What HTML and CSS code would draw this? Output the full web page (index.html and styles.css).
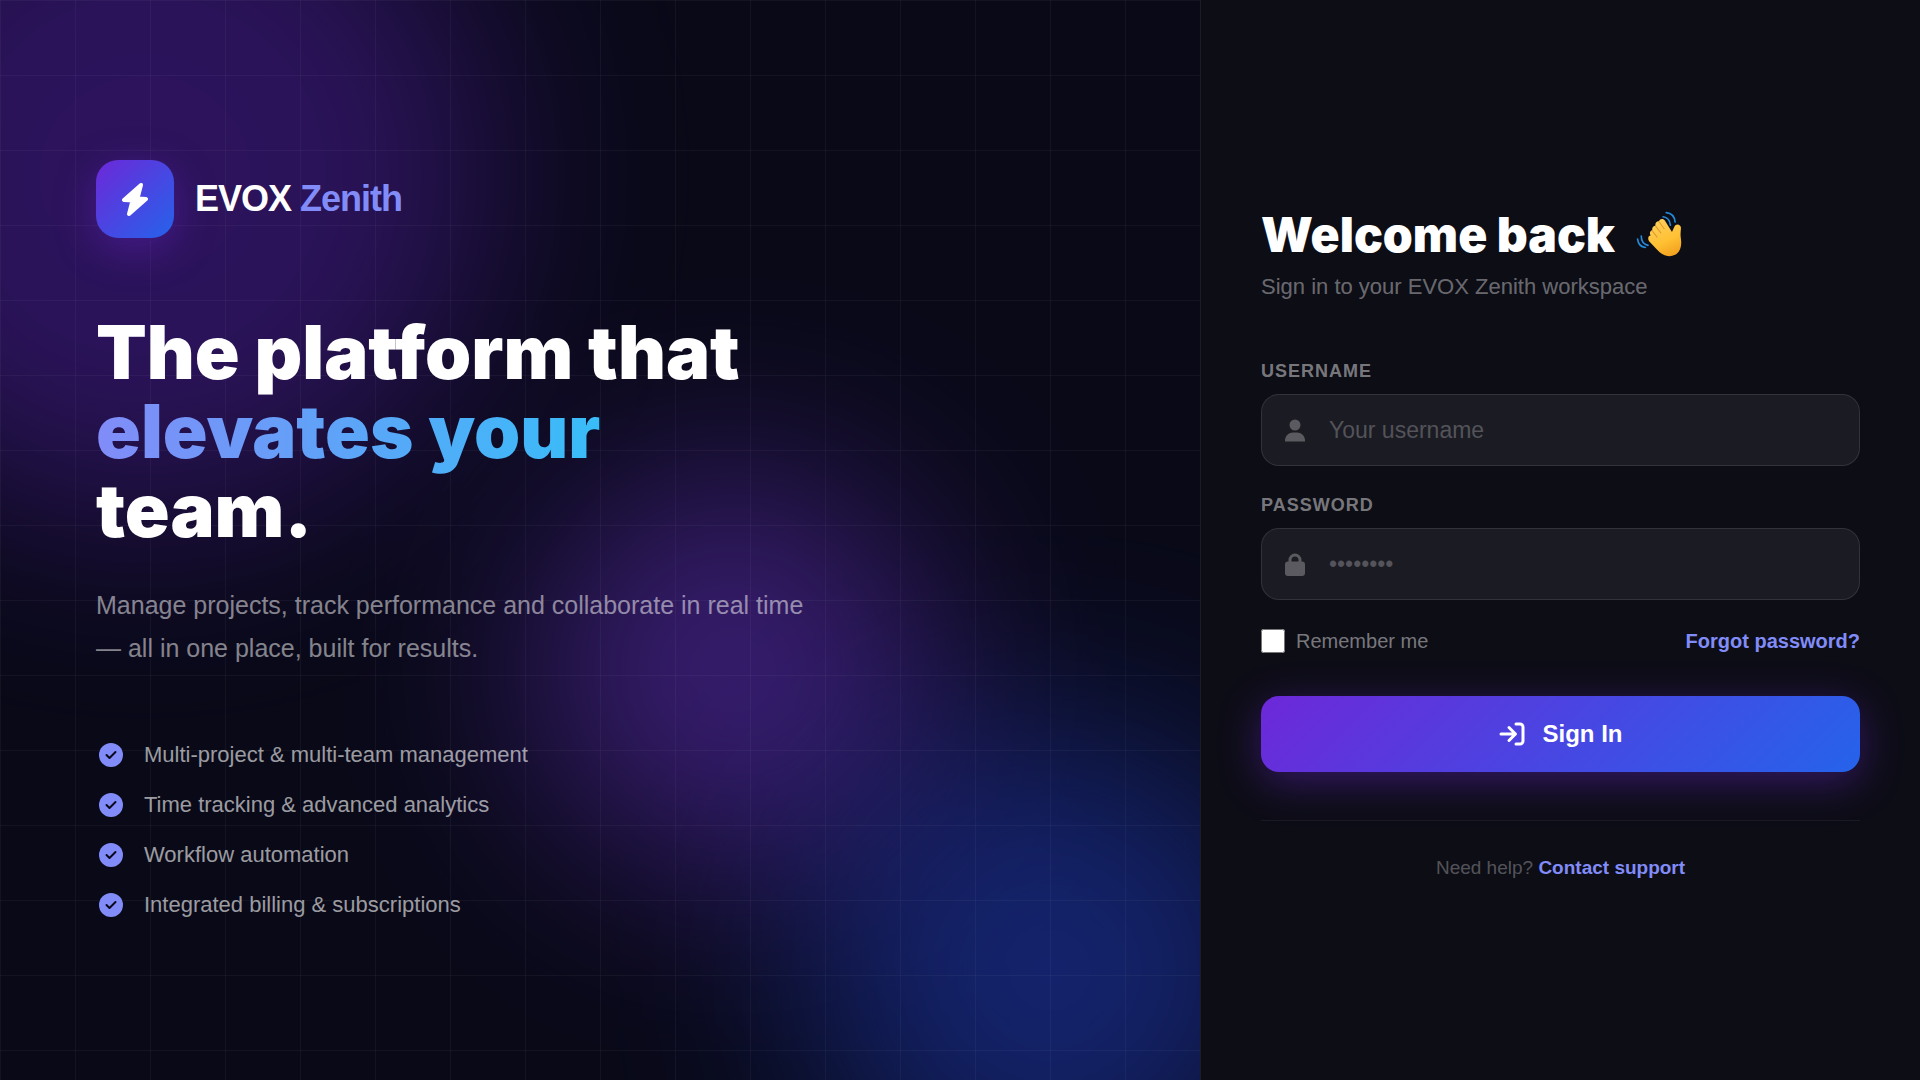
FILE: index.html
```html
<!DOCTYPE html>
<html lang="en">
<head>
  <meta charset="UTF-8" />
  <meta name="viewport" content="width=device-width, initial-scale=1.0" />
  <title>EVOX Zenith - Sign In</title>
  <link rel="stylesheet" href="styles.css">
</head>
<body>
<div class="page">
  <!-- Left panel -->
  <main class="hero">
    <div class="orb orb-1"></div>
    <div class="orb orb-2"></div>
    <div class="orb orb-3"></div>
    <div class="grid-lines"></div>

    <div class="hero-content">
      <div class="brand">
        <div class="brand-icon">
          <svg viewBox="0 0 26 33" width="26" height="33" aria-hidden="true"><path d="M19 2L2 17L10.500 17.500L7 31L24 16L15.500 15.500Z"/></svg>
        </div>
        <div class="brand-name">EVOX <span>Zenith</span></div>
      </div>

      <h1>The platform that<br><span class="gradient-text">elevates your</span><br>team.</h1>

      <p class="hero-text">Manage projects, track performance and collaborate in real time — all in one place, built for results.</p>

      <ul class="features">
        <li><svg viewBox="0 0 24 24" aria-hidden="true"><circle cx="12" cy="12" r="12"/><path d="M7.5 12l3 3 6-6"/></svg>Multi-project &amp; multi-team management</li>
        <li><svg viewBox="0 0 24 24" aria-hidden="true"><circle cx="12" cy="12" r="12"/><path d="M7.5 12l3 3 6-6"/></svg>Time tracking &amp; advanced analytics</li>
        <li><svg viewBox="0 0 24 24" aria-hidden="true"><circle cx="12" cy="12" r="12"/><path d="M7.5 12l3 3 6-6"/></svg>Workflow automation</li>
        <li><svg viewBox="0 0 24 24" aria-hidden="true"><circle cx="12" cy="12" r="12"/><path d="M7.5 12l3 3 6-6"/></svg>Integrated billing &amp; subscriptions</li>
      </ul>
    </div>
  </main>

  <!-- Right panel -->
  <section class="login">
    <h2>Welcome back
      <svg class="wave" viewBox="0 0 48 48" role="img" aria-label="Waving hand">
        <defs>
          <linearGradient id="skin" x1="0.3" y1="0" x2="0.7" y2="1">
            <stop offset="0" stop-color="#ffd05c"/>
            <stop offset="0.6" stop-color="#ffc033"/>
            <stop offset="1" stop-color="#f2a01f"/>
          </linearGradient>
        </defs>
        <g fill="none" stroke="#2489d6" stroke-width="1.6" stroke-linecap="round">
          <path d="M27 6.500c4 .5 6.500 3.500 7 8"/>
          <path d="M30 2.500c5 .5 8 4 8.500 9"/>
          <path d="M6 25c0 4.500 2.500 8 6.500 9"/>
          <path d="M2.500 28c.5 4.500 3.500 7.500 7.500 8"/>
        </g>
        <path fill="url(#skin)" d="M15 24.500c-1.600-2.400-.2-4.800 1.600-5 -.5-2.600 1-4.300 3-4.300 -.5-3 1.500-4.700 3.500-4.300 .6-2.700 4.200-3.200 5.700-.5L35.500 21l2.300-5c1.500-3.500 6.700-2.300 6.300 1.700 -.2 3-.7 5.500-.1 9.300 1.200 7-.5 13.500-5.500 16 -6 3-12.500.5-17-4.500L14 30.500c-2.500-3-1-6 1-6z"/>
        <path fill="none" stroke="#e09a30" stroke-width="1" stroke-linecap="round" d="M16.600 20l4.600 6M19.800 15.500l5 6.500M23.300 11.500l4.700 6.500"/>
      </svg>
    </h2>
    <p class="subtitle">Sign in to your EVOX Zenith workspace</p>

    <form onsubmit="return false">
      <div class="field">
        <label for="username">Username</label>
        <div class="input-wrap">
          <svg viewBox="0 0 20 23" width="20" height="23" aria-hidden="true"><circle cx="10" cy="6" r="5.500"/><path d="M0 22.500v-1C0 16.500 4 13.500 8 13.500h4c4 0 8 3 8 8v1z"/></svg>
          <input type="text" id="username" placeholder="Your username" />
        </div>
      </div>

      <div class="field">
        <label for="password">Password</label>
        <div class="input-wrap">
          <svg viewBox="0 0 20 23" width="20" height="23" aria-hidden="true"><path fill-rule="evenodd" d="M3.500 8.500V7a6.500 6.500 0 0 1 13 0v1.500h.5a3 3 0 0 1 3 3V20a3 3 0 0 1-3 3H3a3 3 0 0 1-3-3v-8.500a3 3 0 0 1 3-3zm3 0h7V7a3.500 3.500 0 0 0-7 0z"/></svg>
          <input type="password" id="password" placeholder="••••••••" />
        </div>
      </div>

      <div class="options">
        <label class="remember"><input type="checkbox" /> Remember me</label>
        <a href="#">Forgot password?</a>
      </div>

      <button type="submit">
        <svg viewBox="0 0 26 24" width="26" height="24" aria-hidden="true"><path d="M2 12h14M10 5.500l6.500 6.500-6.500 6.500M17 2h4a3 3 0 0 1 3 3v14a3 3 0 0 1-3 3h-4"/></svg>
        Sign In
      </button>
    </form>

    <div class="help">Need help? <a href="#">Contact support</a></div>
  </section>
</div>
</body>
</html>
```
FILE: styles.css
```css
* {
  margin: 0;
  padding: 0;
  box-sizing: border-box;
}
body {
  font-family: "Liberation Sans", Arial, sans-serif;
  background: #0a0a14;
  color: #fff;
}
a {
  color: #818cf8;
  font-weight: bold;
  text-decoration: none;
}
.page {
  display: flex;
  min-height: 100vh;
}

/* left panel */
.hero {
  flex: 1;
  position: relative;
  overflow: hidden;
  display: flex;
  align-items: center;
  padding: 60px 96px;
  background: #090918;
}
.orb {
  position: absolute;
  border-radius: 50%;
  filter: blur(100px);
}
.orb-1 {
  width: 690px;
  height: 690px;
  top: -170px;
  left: -200px;
  background: #6d28d9;
  opacity: 0.35;
}
.orb-2 {
  width: 400px;
  height: 400px;
  top: 470px;
  left: 533px;
  background: #7c3aed;
  opacity: 0.42;
}
.orb-3 {
  width: 480px;
  height: 480px;
  right: -90px;
  bottom: -130px;
  background: #2348e0;
  opacity: 0.42;
}
.grid-lines {
  position: absolute;
  inset: 0;
  background-image:
    linear-gradient(rgba(255, 255, 255, 0.04) 1px, transparent 1px),
    linear-gradient(90deg, rgba(255, 255, 255, 0.04) 1px, transparent 1px);
  background-size: 75px 75px;
}
.hero-content {
  position: relative;
  max-width: 720px;
}
.brand {
  display: flex;
  align-items: center;
  gap: 21px;
  margin-bottom: 75px;
}
.brand-icon {
  width: 78px;
  height: 78px;
  border-radius: 22px;
  background: linear-gradient(135deg, #6d28d9, #2563eb);
  box-shadow: 0 10px 40px rgba(109, 40, 217, 0.4);
  display: flex;
  align-items: center;
  justify-content: center;
}
.brand-icon svg {
  fill: #fff;
  stroke: #fff;
  stroke-width: 4;
  stroke-linejoin: round;
}
.brand-name {
  font-size: 36px;
  font-weight: bold;
  letter-spacing: -1px;
}
.brand-name span { color: #818cf8; }
h1 {
  font-family: "Arial Black", Inter, sans-serif;
  font-size: 74px;
  font-weight: 900;
  line-height: 79px;
  margin-bottom: 34px;
}
.gradient-text {
  background: linear-gradient(90deg, #818cf8, #38bdf8);
  -webkit-background-clip: text;
  background-clip: text;
  color: transparent;
}
.hero-text {
  font-size: 25px;
  line-height: 43px;
  color: rgba(255, 255, 255, 0.5);
  margin-bottom: 70px;
}
.features {
  list-style: none;
  display: flex;
  flex-direction: column;
  gap: 20px;
}
.features li {
  display: flex;
  align-items: center;
  gap: 21px;
  height: 30px;
  padding-left: 3px;
  font-size: 22px;
  color: rgba(255, 255, 255, 0.6);
}
.features svg {
  width: 24px;
  height: 24px;
  fill: #818cf8;
}
.features path {
  fill: none;
  stroke: #0b0a1c;
  stroke-width: 2;
  stroke-linecap: round;
  stroke-linejoin: round;
}

/* right panel */
.login {
  width: 37.5%;
  border-left: 1px solid rgba(255, 255, 255, 0.06);
  background: #0d0d16;
  padding: 60px;
  display: flex;
  flex-direction: column;
  justify-content: center;
}
h2 {
  font-family: "Arial Black", Inter, sans-serif;
  font-size: 48px;
  font-weight: 900;
  line-height: 68px;
  display: flex;
  align-items: center;
  gap: 20px;
  margin-bottom: 5px;
}
.wave {
  width: 50px;
  height: 50px;
}
.subtitle {
  font-size: 22px;
  line-height: 26px;
  color: rgba(255, 255, 255, 0.4);
  margin-bottom: 60px;
}
.field { margin-bottom: 28px; }
.field label {
  display: block;
  font-size: 18px;
  line-height: 22px;
  font-weight: bold;
  text-transform: uppercase;
  letter-spacing: 1px;
  color: rgba(255, 255, 255, 0.45);
  margin-bottom: 12px;
}
.input-wrap {
  display: flex;
  align-items: center;
  gap: 24px;
  height: 72px;
  padding: 0 23px;
  border: 1px solid rgba(255, 255, 255, 0.1);
  border-radius: 18px;
  background: rgba(255, 255, 255, 0.06);
}
.input-wrap svg { fill: rgba(255, 255, 255, 0.28); }
.input-wrap input {
  flex: 1;
  height: 70px;
  border: none;
  outline: none;
  background: transparent;
  color: #fff;
  font-family: inherit;
  font-size: 23px;
}
.input-wrap input::placeholder { color: rgba(255, 255, 255, 0.25); }
.options {
  display: flex;
  justify-content: space-between;
  align-items: center;
  font-size: 20px;
  height: 26px;
  margin-bottom: 42px;
}
.remember {
  display: flex;
  align-items: center;
  gap: 11px;
  color: rgba(255, 255, 255, 0.45);
}
.remember input {
  width: 24px;
  height: 24px;
}
button {
  width: 100%;
  height: 76px;
  border: none;
  border-radius: 18px;
  background: linear-gradient(135deg, #6d28d9, #2563eb);
  box-shadow: 0 10px 40px rgba(109, 40, 217, 0.4);
  color: #fff;
  font-family: inherit;
  font-size: 24px;
  font-weight: bold;
  display: flex;
  align-items: center;
  justify-content: center;
  gap: 18px;
  cursor: pointer;
}
button svg {
  fill: none;
  stroke: #fff;
  stroke-width: 3;
  stroke-linecap: round;
  stroke-linejoin: round;
}
.help {
  margin-top: 48px;
  padding-top: 35px;
  border-top: 1px solid rgba(255, 255, 255, 0.06);
  text-align: center;
  font-size: 19px;
  line-height: 23px;
  color: rgba(255, 255, 255, 0.3);
}
```
